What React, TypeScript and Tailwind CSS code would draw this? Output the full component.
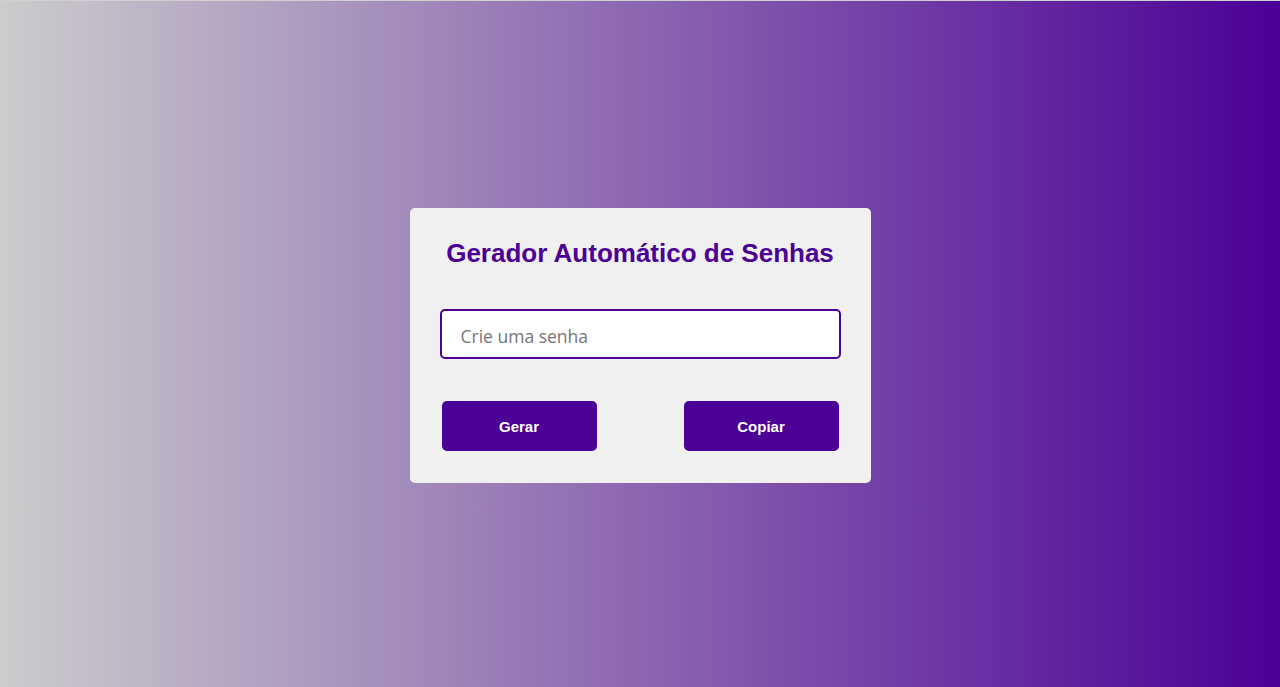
export default function App() {
    return (
        <main className="flex min-h-screen items-center justify-center border-t border-[#d0d0d0] bg-[linear-gradient(to_right,#cccccc,#4b0096)] pt-[3px] font-['Liberation_Sans',Arial,sans-serif]">
            <div className="w-[461px] rounded-[5px] bg-[#f0f0f0] px-[30px] pt-[30px] pb-[32px]">
                <h1 className="text-center text-[26px] leading-[30px] font-bold text-[#4b0096]">
                    Gerador Automático de Senhas
                </h1>
                <input
                    type="text"
                    placeholder="Crie uma senha"
                    className="mt-[41px] block h-[50px] w-full rounded-[5px] border-2 border-[#4b0096] bg-white px-[19px] pt-[3px] font-['Open_Sans',sans-serif] text-[17.5px] text-gray-700 outline-none placeholder:text-[#757575]"
                />
                <div className="mt-[42px] flex justify-between px-[2px]">
                    <button className="h-[50px] w-[155px] rounded-[5px] bg-[#4b0096] pt-[3px] text-[15px] font-bold text-white">
                        Gerar
                    </button>
                    <button className="h-[50px] w-[155px] rounded-[5px] bg-[#4b0096] pt-[3px] text-[15px] font-bold text-white">
                        Copiar
                    </button>
                </div>
            </div>
        </main>
    );
}
